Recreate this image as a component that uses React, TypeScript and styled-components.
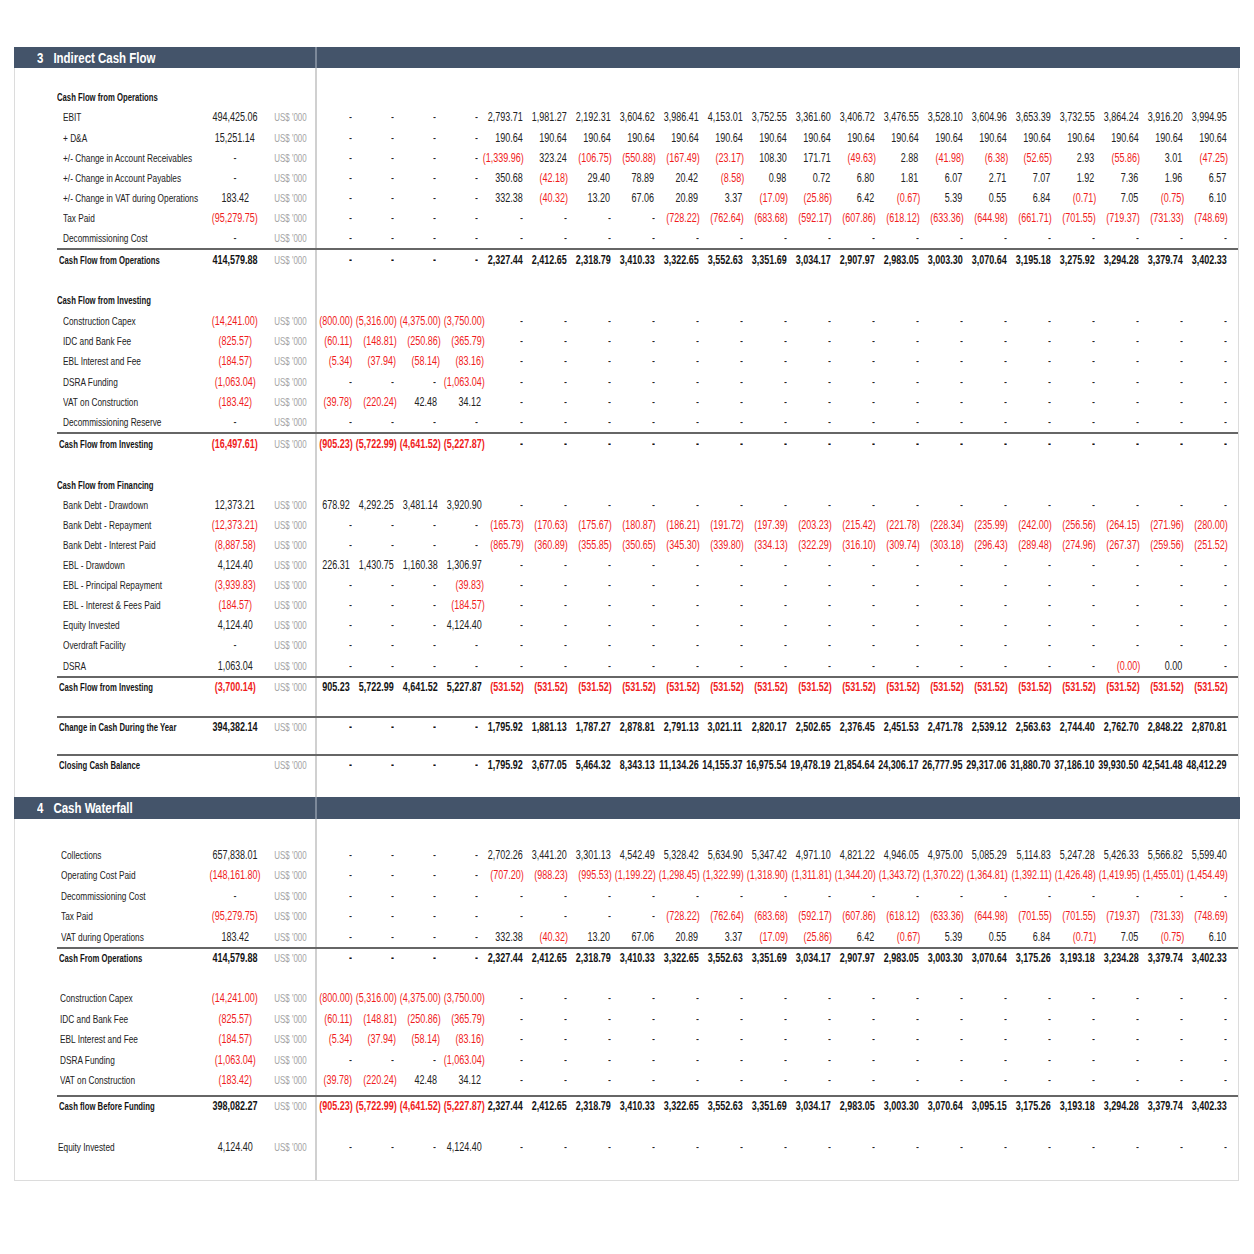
import React from 'react';
import styled, { createGlobalStyle } from 'styled-components';

type Tone = 'pos' | 'neg' | 'dash';
type Variant = 'head' | 'item' | 'total';
type Origin = 'left' | 'center' | 'right';

interface Line {
  kind: 'line';
  variant: Variant;
  label: string;
  total?: string;
  cells?: string[];
  h: number;
  indent?: number;
}
interface Gap {
  kind: 'gap';
  h: number;
}
interface Banner {
  kind: 'bar';
  num: string;
  title: string;
  h: number;
}
type Item = Line | Gap | Banner;

const GlobalStyle = createGlobalStyle`
  html, body { margin: 0; padding: 0; background: #ffffff; }
  body {
    font-family: "Liberation Sans", Arial, sans-serif;
    color: #222222;
  }
`;

const Page = styled.div`
  padding: 47px 0 0 14px;
`;

const Sheet = styled.div`
  width: 1225px;
  box-sizing: border-box;
  border: 1.5px solid #dcdcdc;
  border-top: none;
  padding-bottom: 23px;
  background: linear-gradient(
    to right,
    transparent 300px,
    #d0d0d0 300px,
    #d0d0d0 301.8px,
    transparent 301.8px
  );
`;

/* the sheet was captured squeezed sideways, so every text run is narrowed */
const Squeeze = styled.span<{ $origin: Origin; $sx: number }>`
  display: inline-block;
  flex: none;
  white-space: nowrap;
  transform: scaleX(${p => p.$sx});
  transform-origin: ${p => p.$origin} center;
`;

const Bar = styled.div<{ $h: number }>`
  height: ${p => p.$h}px;
  margin: 0 -1.5px;
  display: flex;
  align-items: center;
  padding-left: 23px;
  color: #ffffff;
  font-size: 14px;
  font-weight: 700;
  background: linear-gradient(
    to right,
    #44546a 301.5px,
    #7d899a 301.5px,
    #7d899a 303px,
    #44546a 303px
  );
`;

const BarNum = styled.span`
  display: inline-block;
  width: 20px;
`;

const Spacer = styled.div<{ $h: number }>`
  height: ${p => p.$h}px;
`;

const Row = styled.div<{ $h: number; $rule?: boolean; $bold?: boolean }>`
  display: grid;
  grid-template-columns: 148px 61px 50px repeat(4, 44px) 38px repeat(16, 44px);
  align-items: center;
  height: ${p => p.$h}px;
  box-sizing: border-box;
  margin-left: 41.5px;
  border-top: ${p => (p.$rule ? '2px solid #666666' : 'none')};
  font-weight: ${p => (p.$bold ? 700 : 400)};
  color: ${p => (p.$bold ? '#141414' : '#222222')};
`;

const Label = styled.div<{ $indent: number; $bold?: boolean }>`
  display: flex;
  padding-left: ${p => p.$indent}px;
  font-size: ${p => (p.$bold ? '11.2px' : '11.5px')};
`;

const Sum = styled.div<{ $tone: Tone }>`
  display: flex;
  justify-content: center;
  font-size: 12px;
  color: ${p => (p.$tone === 'neg' ? '#f01c1c' : 'inherit')};
`;

const Unit = styled.div`
  display: flex;
  justify-content: center;
  font-size: 11.5px;
  font-weight: 400;
  color: #a3a3a3;
`;

const Cell = styled.div<{ $tone: Tone; $pad: number }>`
  display: flex;
  justify-content: flex-end;
  font-size: 12px;
  padding-right: ${p => p.$pad}px;
  color: ${p => (p.$tone === 'neg' ? '#f01c1c' : 'inherit')};
`;

const SX_NUM = 0.75;
const SX_LABEL = 0.72;
const SX_BOLD = 0.69;
const SX_UNIT = 0.69;

const toneOf = (v: string): Tone => (v.startsWith('(') ? 'neg' : v === '-' ? 'dash' : 'pos');

/* construction-period columns (first four) carry a wider right margin */
const padOf = (tone: Tone, col: number): number => {
  if (col < 4) return tone === 'neg' ? 7 : tone === 'pos' ? 10 : 8 + col * 2;
  return tone === 'neg' ? 5.5 : 7;
};

const dash = (n: number) => Array.from({ length: n }, () => '-');

const capex = ['(800.00)', '(5,316.00)', '(4,375.00)', '(3,750.00)', ...dash(17)];
const idc = ['(60.11)', '(148.81)', '(250.86)', '(365.79)', ...dash(17)];
const ebl = ['(5.34)', '(37.94)', '(58.14)', '(83.16)', ...dash(17)];
const dsraFund = ['-', '-', '-', '(1,063.04)', ...dash(17)];
const vatCon = ['(39.78)', '(220.24)', '42.48', '34.12', ...dash(17)];
const equity = ['-', '-', '-', '4,124.40', ...dash(17)];
const vatOps = [
  ...dash(4), '332.38', '(40.32)', '13.20', '67.06', '20.89', '3.37', '(17.09)', '(25.86)', '6.42',
  '(0.67)', '5.39', '0.55', '6.84', '(0.71)', '7.05', '(0.75)', '6.10',
];

const A = 20.2;
const B = 20.3;
const C = 20.1;
const W = 20.5;
const T = 21.3;

const items: Item[] = [
  { kind: 'bar', num: '3', title: 'Indirect Cash Flow', h: 21 },
  { kind: 'gap', h: 19.2 },
  { kind: 'line', variant: 'head', label: 'Cash Flow from Operations', h: A },
  {
    kind: 'line', variant: 'item', label: 'EBIT', total: '494,425.06', h: 20.14,
    cells: [...dash(4), '2,793.71', '1,981.27', '2,192.31', '3,604.62', '3,986.41', '4,153.01', '3,752.55', '3,361.60',
      '3,406.72', '3,476.55', '3,528.10', '3,604.96', '3,653.39', '3,732.55', '3,864.24', '3,916.20', '3,994.95'],
  },
  {
    kind: 'line', variant: 'item', label: '+ D&A', total: '15,251.14', h: 20.14,
    cells: [...dash(4), ...Array.from({ length: 17 }, () => '190.64')],
  },
  {
    kind: 'line', variant: 'item', label: '+/- Change in Account Receivables', total: '-', h: 20.14,
    cells: [...dash(4), '(1,339.96)', '323.24', '(106.75)', '(550.88)', '(167.49)', '(23.17)', '108.30', '171.71',
      '(49.63)', '2.88', '(41.98)', '(6.38)', '(52.65)', '2.93', '(55.86)', '3.01', '(47.25)'],
  },
  {
    kind: 'line', variant: 'item', label: '+/- Change in Account Payables', total: '-', h: 20.14,
    cells: [...dash(4), '350.68', '(42.18)', '29.40', '78.89', '20.42', '(8.58)', '0.98', '0.72', '6.80', '1.81',
      '6.07', '2.71', '7.07', '1.92', '7.36', '1.96', '6.57'],
  },
  {
    kind: 'line', variant: 'item', label: '+/- Change in VAT during Operations', total: '183.42', h: 20.14,
    cells: vatOps,
  },
  {
    kind: 'line', variant: 'item', label: 'Tax Paid', total: '(95,279.75)', h: 20.14,
    cells: [...dash(8), '(728.22)', '(762.64)', '(683.68)', '(592.17)', '(607.86)', '(618.12)', '(633.36)', '(644.98)',
      '(661.71)', '(701.55)', '(719.37)', '(731.33)', '(748.69)'],
  },
  { kind: 'line', variant: 'item', label: 'Decommissioning Cost', total: '-', h: 20.14, cells: dash(21) },
  {
    kind: 'line', variant: 'total', label: 'Cash Flow from Operations', total: '414,579.88', h: T,
    cells: [...dash(4), '2,327.44', '2,412.65', '2,318.79', '3,410.33', '3,322.65', '3,552.63', '3,351.69', '3,034.17',
      '2,907.97', '2,983.05', '3,003.30', '3,070.64', '3,195.18', '3,275.92', '3,294.28', '3,379.74', '3,402.33'],
  },
  { kind: 'gap', h: 20.8 },
  { kind: 'line', variant: 'head', label: 'Cash Flow from Investing', h: B },
  { kind: 'line', variant: 'item', label: 'Construction Capex', total: '(14,241.00)', h: B, cells: capex },
  { kind: 'line', variant: 'item', label: 'IDC and Bank Fee', total: '(825.57)', h: B, cells: idc },
  { kind: 'line', variant: 'item', label: 'EBL Interest and Fee', total: '(184.57)', h: B, cells: ebl },
  { kind: 'line', variant: 'item', label: 'DSRA Funding', total: '(1,063.04)', h: B, cells: dsraFund },
  { kind: 'line', variant: 'item', label: 'VAT on Construction', total: '(183.42)', h: B, cells: vatCon },
  { kind: 'line', variant: 'item', label: 'Decommissioning Reserve', total: '-', h: B, cells: dash(21) },
  {
    kind: 'line', variant: 'total', label: 'Cash Flow from Investing', total: '(16,497.61)', h: T,
    cells: ['(905.23)', '(5,722.99)', '(4,641.52)', '(5,227.87)', ...dash(17)],
  },
  { kind: 'gap', h: 20.8 },
  { kind: 'line', variant: 'head', label: 'Cash Flow from Financing', h: A },
  {
    kind: 'line', variant: 'item', label: 'Bank Debt - Drawdown', total: '12,373.21', h: C,
    cells: ['678.92', '4,292.25', '3,481.14', '3,920.90', ...dash(17)],
  },
  {
    kind: 'line', variant: 'item', label: 'Bank Debt - Repayment', total: '(12,373.21)', h: C,
    cells: [...dash(4), '(165.73)', '(170.63)', '(175.67)', '(180.87)', '(186.21)', '(191.72)', '(197.39)', '(203.23)',
      '(215.42)', '(221.78)', '(228.34)', '(235.99)', '(242.00)', '(256.56)', '(264.15)', '(271.96)', '(280.00)'],
  },
  {
    kind: 'line', variant: 'item', label: 'Bank Debt - Interest Paid', total: '(8,887.58)', h: C,
    cells: [...dash(4), '(865.79)', '(360.89)', '(355.85)', '(350.65)', '(345.30)', '(339.80)', '(334.13)', '(322.29)',
      '(316.10)', '(309.74)', '(303.18)', '(296.43)', '(289.48)', '(274.96)', '(267.37)', '(259.56)', '(251.52)'],
  },
  {
    kind: 'line', variant: 'item', label: 'EBL - Drawdown', total: '4,124.40', h: C,
    cells: ['226.31', '1,430.75', '1,160.38', '1,306.97', ...dash(17)],
  },
  {
    kind: 'line', variant: 'item', label: 'EBL - Principal Repayment', total: '(3,939.83)', h: C,
    cells: ['-', '-', '-', '(39.83)', ...dash(17)],
  },
  {
    kind: 'line', variant: 'item', label: 'EBL - Interest & Fees Paid', total: '(184.57)', h: C,
    cells: ['-', '-', '-', '(184.57)', ...dash(17)],
  },
  { kind: 'line', variant: 'item', label: 'Equity Invested', total: '4,124.40', h: C, cells: equity },
  { kind: 'line', variant: 'item', label: 'Overdraft Facility', total: '-', h: C, cells: dash(21) },
  {
    kind: 'line', variant: 'item', label: 'DSRA', total: '1,063.04', h: C,
    cells: [...dash(18), '(0.00)', '0.00', '-'],
  },
  {
    kind: 'line', variant: 'total', label: 'Cash Flow from Investing', total: '(3,700.14)', h: T,
    cells: ['905.23', '5,722.99', '4,641.52', '5,227.87', ...Array.from({ length: 17 }, () => '(531.52)')],
  },
  { kind: 'gap', h: 19 },
  {
    kind: 'line', variant: 'total', label: 'Change in Cash During the Year', total: '394,382.14', h: T,
    cells: [...dash(4), '1,795.92', '1,881.13', '1,787.27', '2,878.81', '2,791.13', '3,021.11', '2,820.17', '2,502.65',
      '2,376.45', '2,451.53', '2,471.78', '2,539.12', '2,563.63', '2,744.40', '2,762.70', '2,848.22', '2,870.81'],
  },
  { kind: 'gap', h: 16.6 },
  {
    kind: 'line', variant: 'total', label: 'Closing Cash Balance', total: '', h: T,
    cells: [...dash(4), '1,795.92', '3,677.05', '5,464.32', '8,343.13', '11,134.26', '14,155.37', '16,975.54',
      '19,478.19', '21,854.64', '24,306.17', '26,777.95', '29,317.06', '31,880.70', '37,186.10', '39,930.50',
      '42,541.48', '48,412.29'],
  },
  { kind: 'gap', h: 22 },
  { kind: 'bar', num: '4', title: 'Cash Waterfall', h: 22 },
  { kind: 'gap', h: 25.5 },
  {
    kind: 'line', variant: 'item', label: 'Collections', total: '657,838.01', h: W, indent: 4,
    cells: [...dash(4), '2,702.26', '3,441.20', '3,301.13', '4,542.49', '5,328.42', '5,634.90', '5,347.42', '4,971.10',
      '4,821.22', '4,946.05', '4,975.00', '5,085.29', '5,114.83', '5,247.28', '5,426.33', '5,566.82', '5,599.40'],
  },
  {
    kind: 'line', variant: 'item', label: 'Operating Cost Paid', total: '(148,161.80)', h: W, indent: 4,
    cells: [...dash(4), '(707.20)', '(988.23)', '(995.53)', '(1,199.22)', '(1,298.45)', '(1,322.99)', '(1,318.90)',
      '(1,311.81)', '(1,344.20)', '(1,343.72)', '(1,370.22)', '(1,364.81)', '(1,392.11)', '(1,426.48)',
      '(1,419.95)', '(1,455.01)', '(1,454.49)'],
  },
  { kind: 'line', variant: 'item', label: 'Decommissioning Cost', total: '-', h: W, indent: 4, cells: dash(21) },
  {
    kind: 'line', variant: 'item', label: 'Tax Paid', total: '(95,279.75)', h: W, indent: 4,
    cells: [...dash(8), '(728.22)', '(762.64)', '(683.68)', '(592.17)', '(607.86)', '(618.12)', '(633.36)', '(644.98)',
      '(701.55)', '(701.55)', '(719.37)', '(731.33)', '(748.69)'],
  },
  { kind: 'line', variant: 'item', label: 'VAT during Operations', total: '183.42', h: W, indent: 4, cells: vatOps },
  {
    kind: 'line', variant: 'total', label: 'Cash From Operations', total: '414,579.88', h: 20.7,
    cells: [...dash(4), '2,327.44', '2,412.65', '2,318.79', '3,410.33', '3,322.65', '3,552.63', '3,351.69', '3,034.17',
      '2,907.97', '2,983.05', '3,003.30', '3,070.64', '3,175.26', '3,193.18', '3,234.28', '3,379.74', '3,402.33'],
  },
  { kind: 'gap', h: 20.5 },
  { kind: 'line', variant: 'item', label: 'Construction Capex', total: '(14,241.00)', h: W, indent: 3, cells: capex },
  { kind: 'line', variant: 'item', label: 'IDC and Bank Fee', total: '(825.57)', h: W, indent: 3, cells: idc },
  { kind: 'line', variant: 'item', label: 'EBL Interest and Fee', total: '(184.57)', h: W, indent: 3, cells: ebl },
  { kind: 'line', variant: 'item', label: 'DSRA Funding', total: '(1,063.04)', h: W, indent: 3, cells: dsraFund },
  { kind: 'line', variant: 'item', label: 'VAT on Construction', total: '(183.42)', h: W, indent: 3, cells: vatCon },
  { kind: 'gap', h: 4 },
  {
    kind: 'line', variant: 'total', label: 'Cash flow Before Funding', total: '398,082.27', h: T,
    cells: ['(905.23)', '(5,722.99)', '(4,641.52)', '(5,227.87)', '2,327.44', '2,412.65', '2,318.79', '3,410.33',
      '3,322.65', '3,552.63', '3,351.69', '3,034.17', '2,983.05', '3,003.30', '3,070.64', '3,095.15', '3,175.26',
      '3,193.18', '3,294.28', '3,379.74', '3,402.33'],
  },
  { kind: 'gap', h: 20.7 },
  { kind: 'line', variant: 'item', label: 'Equity Invested', total: '4,124.40', h: W, indent: 1, cells: equity },
];

const SheetLine: React.FC<{ line: Line }> = ({ line }) => {
  const bold = line.variant !== 'item';
  const indent = line.indent ?? (line.variant === 'item' ? 6 : line.variant === 'total' ? 2 : 0);
  return (
    <Row $h={line.h} $rule={line.variant === 'total'} $bold={bold}>
      <Label $indent={indent} $bold={bold}>
        <Squeeze $origin="left" $sx={bold ? SX_BOLD : SX_LABEL}>{line.label}</Squeeze>
      </Label>
      {line.variant !== 'head' && (
        <>
          <Sum $tone={toneOf(line.total ?? '')}>
            <Squeeze $origin="center" $sx={SX_NUM}>{line.total}</Squeeze>
          </Sum>
          <Unit>
            <Squeeze $origin="center" $sx={SX_UNIT}>US$ &apos;000</Squeeze>
          </Unit>
          {(line.cells ?? []).map((v, i) => {
            const tone = toneOf(v);
            return (
              <Cell key={i} $tone={tone} $pad={padOf(tone, i)}>
                <Squeeze $origin="right" $sx={SX_NUM}>{v}</Squeeze>
              </Cell>
            );
          })}
        </>
      )}
    </Row>
  );
};

const App: React.FC = () => (
  <Page>
    <GlobalStyle />
    <Sheet>
      {items.map((it, i) => {
        if (it.kind === 'bar') {
          return (
            <Bar key={i} $h={it.h}>
              <Squeeze $origin="left" $sx={0.82}>
                <BarNum>{it.num}</BarNum>
                {it.title}
              </Squeeze>
            </Bar>
          );
        }
        if (it.kind === 'gap') return <Spacer key={i} $h={it.h} />;
        return <SheetLine key={i} line={it} />;
      })}
    </Sheet>
  </Page>
);

export default App;
